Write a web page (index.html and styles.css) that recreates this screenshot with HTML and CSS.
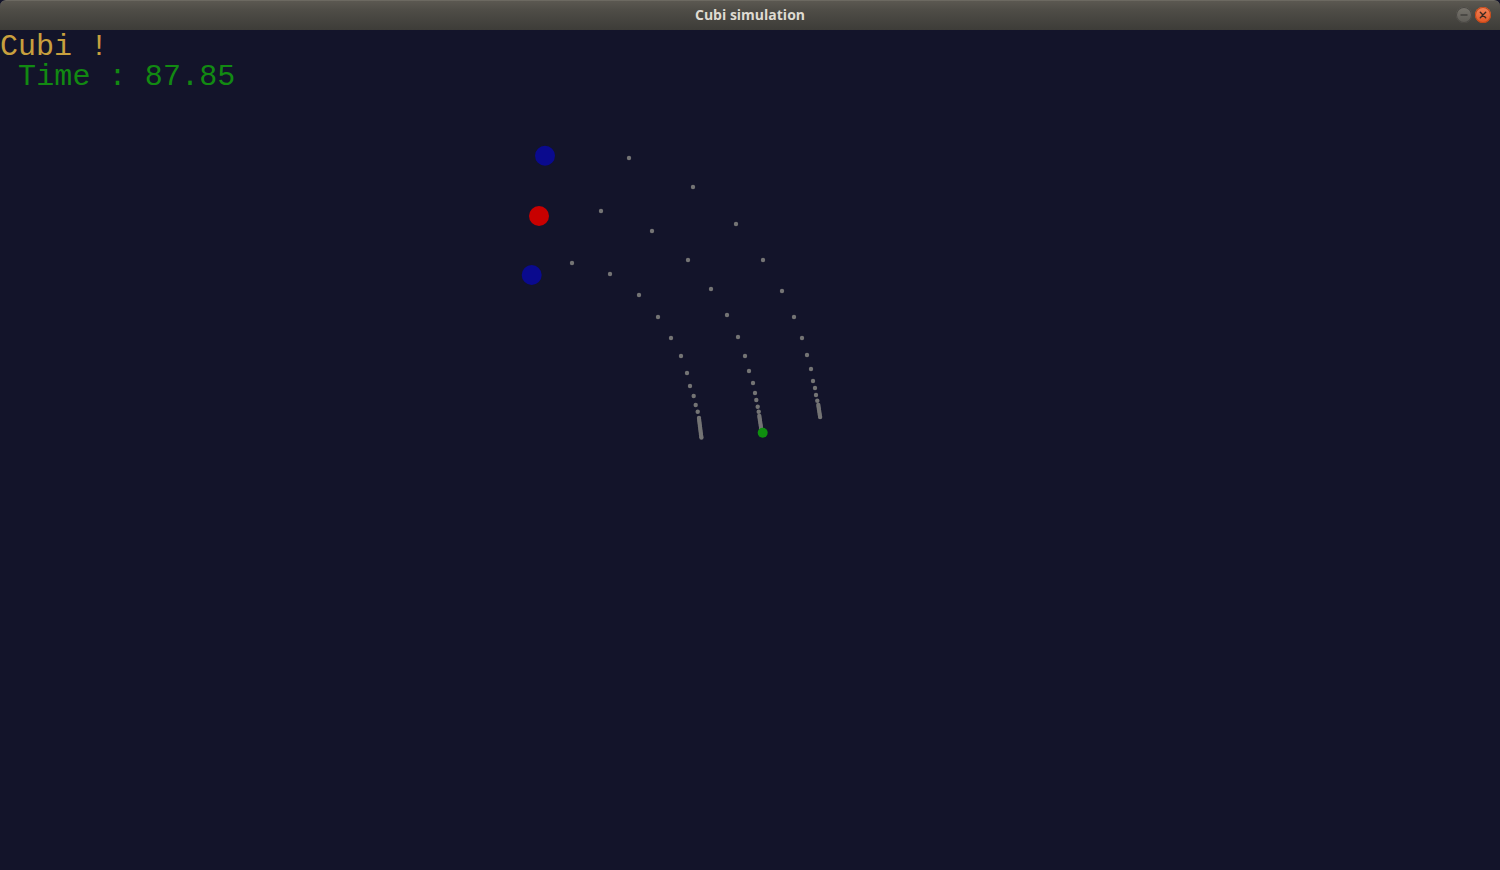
FILE: index.html
```html
<!DOCTYPE html>
<html>
<head>
<meta charset="utf-8">
<title>Cubi simulation</title>
<link rel="stylesheet" href="styles.css">
</head>
<body>
<div class="window">
  <div class="titlebar">
    <span class="title">Cubi simulation</span>
    <div class="controls">
      <span class="btn btn-min"><svg width="16" height="16" viewBox="0 0 16 16"><line x1="4.5" y1="8" x2="11.5" y2="8" stroke="#3a3a37" stroke-width="1.3"/></svg></span>
      <span class="btn btn-close"><svg width="16" height="16" viewBox="0 0 16 16"><path d="M5.3 5.3 L10.7 10.7 M10.7 5.3 L5.3 10.7" stroke="#3c2a22" stroke-width="1.4" stroke-linecap="round"/></svg></span>
    </div>
  </div>
  <div class="canvas">
    <div class="hud">
      <div class="hud-line hud-title">Cubi !</div>
      <div class="hud-line hud-time"> Time : 87.85</div>
    </div>
    <svg class="scene" width="1500" height="840" viewBox="0 30 1500 840">
      <g fill="#747474">
        <circle cx="629" cy="158" r="2.2"/>
        <circle cx="693" cy="187" r="2.2"/>
        <circle cx="736" cy="224" r="2.2"/>
        <circle cx="763" cy="260" r="2.2"/>
        <circle cx="782" cy="291" r="2.2"/>
        <circle cx="794" cy="317" r="2.2"/>
        <circle cx="802" cy="338" r="2.2"/>
        <circle cx="807" cy="355" r="2.2"/>
        <circle cx="811" cy="369" r="2.2"/>
        <circle cx="813" cy="381" r="2.2"/>
        <circle cx="815" cy="388" r="2.2"/>
        <circle cx="816" cy="395" r="2.2"/>
        <circle cx="817.3" cy="400.7" r="2.2"/>
        <circle cx="818.3" cy="405" r="2.2"/>
        <circle cx="818.6" cy="407" r="2.2"/>
        <circle cx="818.9" cy="409" r="2.2"/>
        <circle cx="819.2" cy="411" r="2.2"/>
        <circle cx="819.5" cy="413" r="2.2"/>
        <circle cx="819.8" cy="415" r="2.2"/>
        <circle cx="820.1" cy="417" r="2.2"/>
        <circle cx="601" cy="211" r="2.2"/>
        <circle cx="652" cy="231" r="2.2"/>
        <circle cx="688" cy="260" r="2.2"/>
        <circle cx="711" cy="289" r="2.2"/>
        <circle cx="727" cy="315" r="2.2"/>
        <circle cx="738" cy="337" r="2.2"/>
        <circle cx="745" cy="356" r="2.2"/>
        <circle cx="749" cy="371" r="2.2"/>
        <circle cx="753" cy="383" r="2.2"/>
        <circle cx="755" cy="393" r="2.2"/>
        <circle cx="756.3" cy="400" r="2.2"/>
        <circle cx="757.7" cy="406.7" r="2.2"/>
        <circle cx="758.7" cy="411.7" r="2.2"/>
        <circle cx="759.3" cy="416" r="2.2"/>
        <circle cx="759.6" cy="418" r="2.2"/>
        <circle cx="759.9" cy="420" r="2.2"/>
        <circle cx="760.2" cy="422" r="2.2"/>
        <circle cx="760.5" cy="424" r="2.2"/>
        <circle cx="760.8" cy="426" r="2.2"/>
        <circle cx="761" cy="428" r="2.2"/>
        <circle cx="572" cy="263" r="2.2"/>
        <circle cx="610" cy="274" r="2.2"/>
        <circle cx="639" cy="295" r="2.2"/>
        <circle cx="658" cy="317" r="2.2"/>
        <circle cx="671" cy="338" r="2.2"/>
        <circle cx="681" cy="356" r="2.2"/>
        <circle cx="687" cy="373" r="2.2"/>
        <circle cx="690" cy="386" r="2.2"/>
        <circle cx="693.7" cy="396" r="2.2"/>
        <circle cx="695.7" cy="405" r="2.2"/>
        <circle cx="697.7" cy="411.7" r="2.2"/>
        <circle cx="699" cy="418" r="2.2"/>
        <circle cx="699.2" cy="420" r="2.2"/>
        <circle cx="699.4" cy="422" r="2.2"/>
        <circle cx="699.7" cy="424" r="2.2"/>
        <circle cx="699.9" cy="426" r="2.2"/>
        <circle cx="700.2" cy="428" r="2.2"/>
        <circle cx="700.4" cy="430" r="2.2"/>
        <circle cx="700.7" cy="432" r="2.2"/>
        <circle cx="700.9" cy="434" r="2.2"/>
        <circle cx="701.2" cy="436" r="2.2"/>
        <circle cx="701.4" cy="437.5" r="2.2"/>
      </g>
      <circle cx="545" cy="155.7" r="10" fill="#0a0a8e"/>
      <circle cx="539" cy="216" r="10" fill="#c80000"/>
      <circle cx="531.7" cy="275" r="10" fill="#0a0a8e"/>
      <circle cx="762.7" cy="432.7" r="5" fill="#0f8f0f"/>
    </svg>
  </div>
</div>
</body>
</html>
```
FILE: styles.css
```css
html, body {
  margin: 0;
  padding: 0;
  background: #13142a;
}

.window {
  width: 1500px;
  height: 870px;
  display: flex;
  flex-direction: column;
  overflow: hidden;
}

.titlebar {
  height: 30px;
  flex: none;
  position: relative;
  display: flex;
  align-items: center;
  justify-content: center;
  padding-bottom: 2px;
  background: linear-gradient(#5b5851 0%, #4f4d47 30%, #3d3c38 100%);
  border-top: 1px solid #6c6961;
  box-sizing: border-box;
  border-radius: 6px 6px 0 0;
}

.title {
  font-family: "Open Sans", "DejaVu Sans", sans-serif;
  font-weight: 700;
  font-size: 14px;
  color: #dfdbd2;
}

.controls {
  position: absolute;
  right: 9px;
  top: 6px;
  display: flex;
  gap: 3px;
}

.btn {
  width: 16px;
  height: 16px;
  border-radius: 50%;
  display: block;
}

.btn svg {
  display: block;
}

.btn-min {
  background: linear-gradient(#77746d, #5c5a55);
  box-shadow: inset 0 0 0 1px #4a4844;
}

.btn-close {
  background: linear-gradient(#f3845a, #e25624);
  box-shadow: inset 0 0 0 1px #c24818;
}

.canvas {
  flex: 1;
  position: relative;
  background: #13142a;
}

.hud {
  position: relative;
  z-index: 1;
  padding-top: 2px;
  font-family: "Liberation Mono", "Courier New", monospace;
  font-size: 30px;
  line-height: 30px;
}

.hud-line {
  white-space: pre;
  height: 30px;
}

.hud-title {
  color: #c8a03e;
}

.hud-time {
  color: #128a12;
  letter-spacing: 0.1px;
}

.scene {
  position: absolute;
  left: 0;
  top: 0;
}
```
